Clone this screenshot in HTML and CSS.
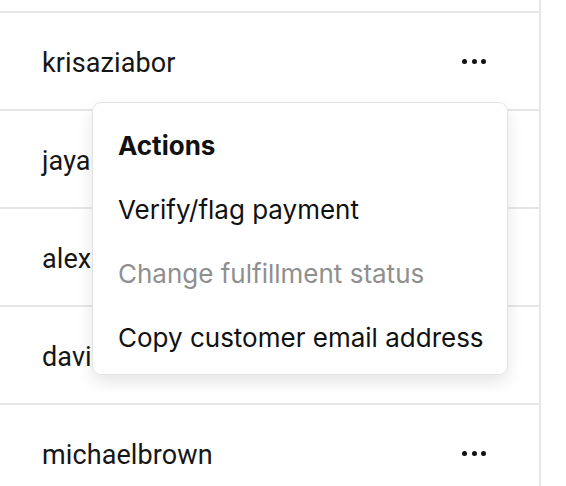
FILE: index.html
```html
<!DOCTYPE html>
<html>
<head>
<meta charset="utf-8">
<link rel="stylesheet" href="styles.css">
</head>
<body>
<div class="table">
  <div class="row row-partial"></div>
  <div class="row">
    <span class="name">krisaziabor</span>
    <span class="more"><i></i><i></i><i></i></span>
  </div>
  <div class="row">
    <span class="name">jayaram</span>
    <span class="more"><i></i><i></i><i></i></span>
  </div>
  <div class="row">
    <span class="name">alexmiller</span>
    <span class="more"><i></i><i></i><i></i></span>
  </div>
  <div class="row">
    <span class="name">davidjohnson</span>
    <span class="more"><i></i><i></i><i></i></span>
  </div>
  <div class="row">
    <span class="name">michaelbrown</span>
    <span class="more"><i></i><i></i><i></i></span>
  </div>

  <div class="menu">
    <div class="menu-title">Actions</div>
    <div class="menu-item">Verify/flag payment</div>
    <div class="menu-item disabled">Change fulfillment status</div>
    <div class="menu-item">Copy customer email address</div>
  </div>
</div>
</body>
</html>
```

FILE: styles.css
```css
html, body {
  margin: 0;
  padding: 0;
  background: #ffffff;
}

body {
  width: 566px;
  height: 486px;
  overflow: hidden;
}

.table {
  position: relative;
  width: 539px;
  border-right: 2px solid #e6e6e6;
  min-height: 486px;
  font-family: Roboto, "Liberation Sans", sans-serif;
  color: #161616;
}

.row {
  height: 96px;
  border-bottom: 2px solid #e6e6e6;
  display: flex;
  align-items: center;
  justify-content: space-between;
  padding: 0 53px 0 42px;
  font-size: 27px;
  overflow: hidden;
  white-space: nowrap;
}

.row-partial {
  height: 11px;
}

.name {
  padding-top: 4px;
  letter-spacing: 0.1px;
}

.more {
  display: flex;
  gap: 4.5px;
  padding-top: 1px;
}

.more i {
  display: block;
  width: 5px;
  height: 5px;
  border-radius: 50%;
  background: #111111;
}

.menu {
  position: absolute;
  left: 92px;
  top: 102px;
  width: 414px;
  height: 271px;
  box-sizing: content-box;
  background: #ffffff;
  border: 1px solid #e4e4e4;
  border-radius: 9px;
  box-shadow: 0 7px 16px rgba(0, 0, 0, 0.1);
  font-family: Inter, "Liberation Sans", sans-serif;
  font-size: 26px;
  color: #111111;
}

.menu-title,
.menu-item {
  height: 64px;
  line-height: 64px;
  padding-left: 25px;
}

.menu-title {
  font-weight: 700;
  margin-top: 11px;
}

.menu-item.disabled {
  color: #8f8f8f;
}
```
